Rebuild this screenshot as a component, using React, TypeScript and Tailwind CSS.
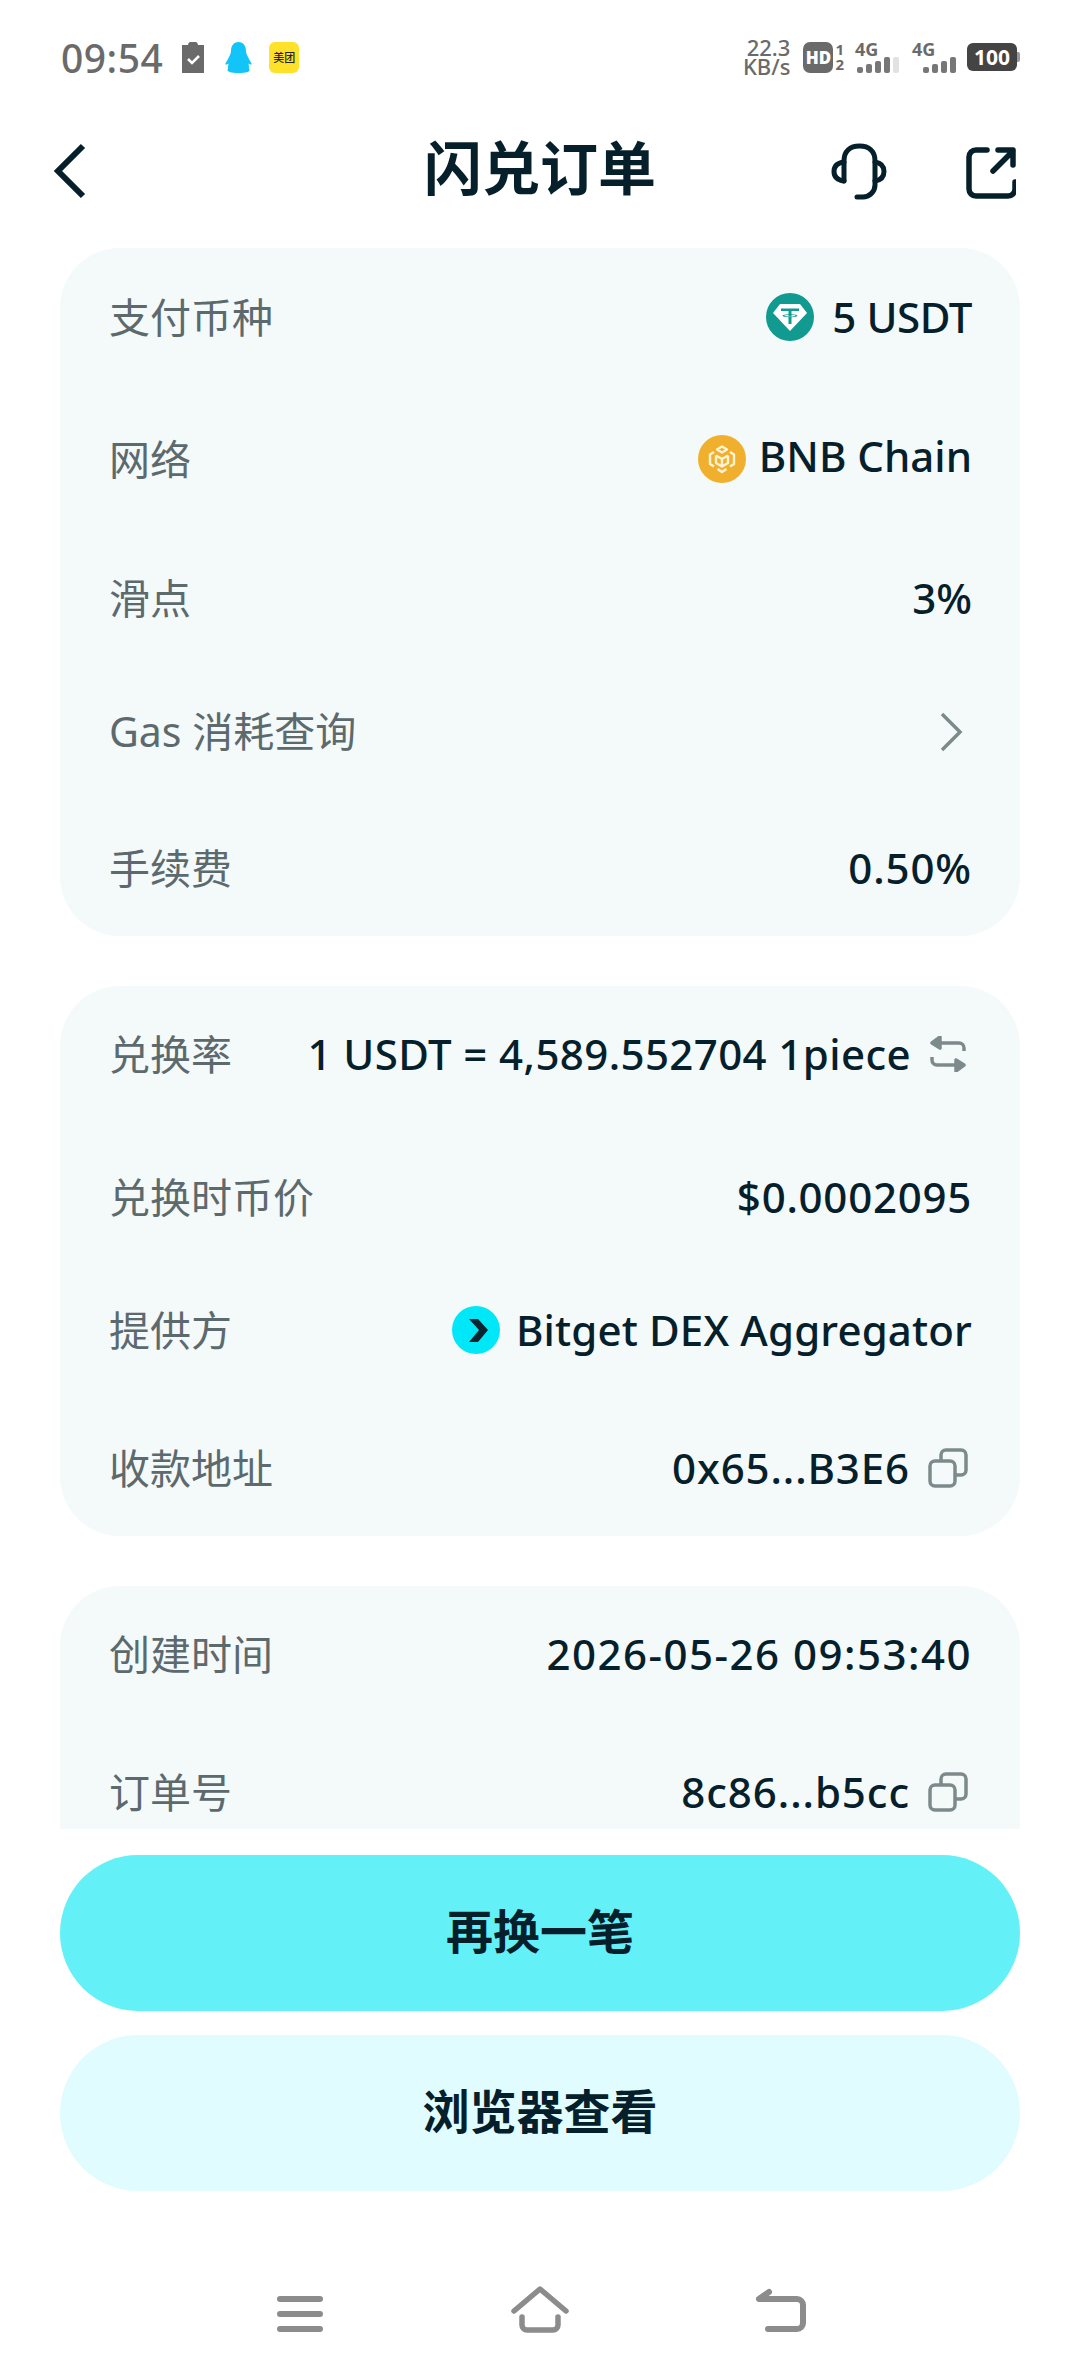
const FONT = "font-['Noto_Sans','Noto_Sans_CJK_SC',sans-serif]";

function CopyIcon() {
  return (
    <svg className="mr-[4px]" width="40" height="40" viewBox="0 0 40 40" fill="none" stroke="#7d8a8c" strokeWidth="3.5">
      <rect x="2" y="13" width="25" height="25" rx="5" />
      <path d="M13 12V7a5 5 0 0 1 5-5h15a5 5 0 0 1 5 5v15a5 5 0 0 1-5 5h-5" />
    </svg>
  );
}

function SwapIcon() {
  return (
    <svg className="mr-[5px]" width="38" height="36" viewBox="0 0 38 36" fill="#7d8a8c" stroke="#7d8a8c" strokeWidth="3.5" strokeLinejoin="round">
      <path d="M11 1 3 7l8 5Z" />
      <path d="M9 7h21a5 5 0 0 1 5 5v3" fill="none" />
      <path d="M27 35l8-6-8-5Z" />
      <path d="M29 29H8a5 5 0 0 1-5-5v-3" fill="none" />
    </svg>
  );
}

function TetherIcon() {
  return (
    <svg width="48" height="48" viewBox="0 0 48 48">
      <circle cx="24" cy="24" r="24" fill="#109a90" />
      <path d="M14 11h20l7 9-17 18L7 20Z" fill="#fff" />
      <path d="M15 15.500h18v2.500h-7.500v3.200c3.500.2 6 .8 6 1.500s-2.500 1.300-6 1.500V31h-3v-6.800c-3.500-.2-6-.8-6-1.500s2.500-1.300 6-1.500V18H15Zm7.500 6.600c-2.600.1-4.300.4-4.300.7s2.600.7 5.800.7 5.800-.3 5.800-.7-1.700-.6-4.300-.7v1.200h-3Z" fill="#109a90" />
    </svg>
  );
}

function BnbIcon() {
  return (
    <svg width="48" height="48" viewBox="0 0 48 48" fill="none">
      <circle cx="24" cy="24" r="24" fill="#f0b02e" />
      <g stroke="#fff3d4" strokeWidth="2.400" strokeLinejoin="round">
        <path d="M24 11.500 29 14.500 24 17.500 19 14.500Z" />
        <path d="M16 17 12 19.500V29l4 2.500M32 17l4 2.500V29l-4 2.500" />
        <path d="M18 20.500 24 24l6-3.500M24 24v7M18 20.500V28l6 3.500 6-3.500v-7.500" />
        <path d="M19.500 34l4.500 3 4.500-3" />
      </g>
    </svg>
  );
}

function BitgetIcon() {
  return (
    <svg width="48" height="48" viewBox="0 0 48 48">
      <circle cx="24" cy="24" r="24" fill="#00e8f8" />
      <path d="M17 13h9l10 11-10 12h-9l10-12Z" fill="#0a2530" />
    </svg>
  );
}

function Row({ label, h, children }: { label: string; h: string; children: React.ReactNode }) {
  return (
    <div className={`flex items-center justify-between ${h}`}>
      <span className="text-[41px] leading-none text-[#5c6a6e]">{label}</span>
      <div className="flex items-center gap-[18px] text-[42px] leading-none font-medium text-[#06202b]">{children}</div>
    </div>
  );
}

function Signal({ up }: { up?: boolean }) {
  return (
    <div className="relative h-[31px] w-[44px] text-[#6a6a6a]">
      <span className="absolute top-[-3px] left-0 text-[18px] leading-[20px] font-bold">4G</span>
      <div className="absolute right-0 bottom-0 flex items-end gap-[3px]">
        <div className="h-[6px] w-[6px] rounded-[2px] bg-[#777]" />
        <div className="h-[9px] w-[6px] rounded-[2px] bg-[#777]" />
        <div className="h-[12px] w-[6px] rounded-[2px] bg-[#777]" />
        <div className="h-[16px] w-[6px] rounded-[2px] bg-[#777]" />
        {up && <div className="h-[16px] w-[6px] rounded-[2px] bg-[#e2e2e2]" />}
      </div>
    </div>
  );
}

function StatusBar() {
  return (
    <div className="flex h-[114px] items-center justify-between pr-[60px] pl-[61px]">
      <div className="flex items-center">
        <span className="text-[39px] leading-none font-medium tracking-[0.5px] text-[#6a6a6a]">09:54</span>
        <svg className="ml-[19px]" width="22" height="31" viewBox="0 0 22 31">
          <path d="M0 3h6a5 4 0 0 1 10 0h6v28H0Z" fill="#6a6a6a" />
          <path d="M6 17l4 4 7-7" fill="none" stroke="#fff" strokeWidth="2.500" />
        </svg>
        <svg className="ml-[21px]" width="27" height="31" viewBox="0 0 27 31">
          <path d="M13.500 0c5 0 7.500 4 7.500 9 0 3 1.500 4.500 3 8 1 2.500 3.500 5 2.500 5.500-1 .5-2.500-1-3-1 .5 3 .5 5 1 7 0 1-3 2.500-11 2.500s-10.500-1.500-11-2.500c.5-2 .5-4 1-7-.5 0-2 1.500-3 1-1-.5 1.500-3 2.500-5.500 1.500-3.500 3-5 3-8 0-5 2.500-9 7.500-9Z" fill="#12c4f8" />
        </svg>
        <div className="ml-[17px] flex h-[31px] w-[30px] items-center justify-center rounded-[6px] bg-[#ffe12a] text-[11px] leading-none font-medium whitespace-nowrap text-[#222]">美团</div>
      </div>
      <div className="flex items-center">
        <div className="text-right text-[22px] leading-[19px] font-medium whitespace-nowrap text-[#6a6a6a]">
          22.3
          <br />
          KB/s
        </div>
        <div className="ml-[13px] flex h-[31px] w-[30px] items-center justify-center rounded-[7px] bg-[#6a6a6a] text-[17px] leading-none font-black text-white">HD</div>
        <div className="ml-[2px] text-center text-[15px] leading-[15px] font-bold text-[#6a6a6a]">
          1
          <br />
          2
        </div>
        <div className="ml-[11px]"><Signal up /></div>
        <div className="ml-[13px]"><Signal /></div>
        <div className="ml-[11px] flex h-[28px] w-[50px] items-center justify-center rounded-[6px] bg-[#444] text-[21px] leading-none font-bold text-white">100</div>
        <div className="h-[10px] w-[3px] rounded-r-[2px] bg-[#999]" />
      </div>
    </div>
  );
}

function Header() {
  return (
    <div className="relative flex h-[134px] items-center justify-center pb-[26px]">
      <svg className="absolute top-[28px] left-[52px]" width="36" height="58" viewBox="0 0 36 58" fill="none" stroke="#06202b" strokeWidth="6">
        <path d="M31 4 6 29l25 25" />
      </svg>
      <span className="text-[58px] leading-none font-semibold text-[#06202b]">闪兑订单</span>
      <svg className="absolute top-[29px] left-[831px]" width="56" height="58" viewBox="0 0 56 58" fill="none" stroke="#06202b" strokeWidth="5" strokeLinecap="round" strokeLinejoin="round">
        <path d="M13 38V18C13 8 19 3 28.500 3S44 8 44 18v24c0 7-6 12-12 12h-6" />
        <path d="M13 19C6 20 3 23 3 28.500S6 37 13 38" />
        <path d="M44 19c6 1 9 4 9 9.500S50 37 44 38" />
      </svg>
      <svg className="absolute top-[33px] left-[966px]" width="50" height="52" viewBox="0 0 50 52" fill="none" stroke="#06202b" strokeWidth="5.500" strokeLinecap="round" strokeLinejoin="round">
        <path d="M21 3H10a7 7 0 0 0-7 7v32a7 7 0 0 0 7 7h32a7 7 0 0 0 7-7V35" />
        <path d="M27 24 47 4M32 3h15v15" />
      </svg>
    </div>
  );
}

function Card({ className, children }: { className: string; children: React.ReactNode }) {
  return <div className={`mx-[60px] bg-[#f4f9fa] pr-[48px] pl-[49px] ${className}`}>{children}</div>;
}

function NavBar() {
  return (
    <div className="mt-[93px] flex justify-between px-[270px]">
      <svg width="60" height="60" viewBox="0 0 60 60" fill="none" stroke="#8c8c8c" strokeWidth="6" strokeLinecap="round">
        <path d="M10 15h40M10 30h40M10 45h40" />
      </svg>
      <svg width="60" height="60" viewBox="0 0 60 60" fill="none" stroke="#8c8c8c" strokeWidth="5.500" strokeLinecap="round" strokeLinejoin="round">
        <path d="M4 27 30 5l26 22" />
        <path d="M12 33v8a5 5 0 0 0 5 5h26a5 5 0 0 0 5-5v-8" />
      </svg>
      <svg width="60" height="60" viewBox="0 0 60 60" fill="none" stroke="#8c8c8c" strokeWidth="6" strokeLinecap="round" strokeLinejoin="round">
        <path d="M19 8 9 15h38a6 6 0 0 1 6 6v18a6 6 0 0 1-6 6H18" />
      </svg>
    </div>
  );
}

export default function App() {
  return (
    <div className={`${FONT} h-[2376px] w-[1080px] overflow-hidden bg-white`}>
      <StatusBar />
      <Header />
      <div className="flex h-[1581px] flex-col gap-[50px] overflow-hidden">
        <Card className="h-[688px] shrink-0 rounded-[60px]">
          <Row label="支付币种" h="h-[138px]">
            <TetherIcon />
            <span className="tracking-[-0.4px]">5 USDT</span>
          </Row>
          <Row label="网络" h="h-[146px]">
            <div className="flex items-center gap-[13px]">
              <BnbIcon />
              <span className="mb-[6px]">BNB Chain</span>
            </div>
          </Row>
          <Row label="滑点" h="h-[132px]">
            <span>3%</span>
          </Row>
          <Row label="Gas 消耗查询" h="h-[135px]">
            <svg className="mr-[9px]" width="24" height="40" viewBox="0 0 24 40" fill="none" stroke="#7d8a8c" strokeWidth="3.500">
              <path d="M3 2l18 18L3 38" />
            </svg>
          </Row>
          <Row label="手续费" h="h-[138px]">
            <span className="tracking-[0.9px]">0.50%</span>
          </Row>
        </Card>
        <Card className="h-[550px] shrink-0 rounded-[60px]">
          <Row label="兑换率" h="h-[136px]">
            <span className="tracking-[0.4px]">1 USDT = 4,589.552704 1piece</span>
            <SwapIcon />
          </Row>
          <Row label="兑换时币价" h="h-[150px]">
            <span className="tracking-[0.75px]">$0.0002095</span>
          </Row>
          <Row label="提供方" h="h-[116px]">
            <div className="flex items-center gap-[16px]">
              <BitgetIcon />
              <span className="tracking-[0.15px]">Bitget DEX Aggregator</span>
            </div>
          </Row>
          <Row label="收款地址" h="h-[148px] pt-[12px]">
            <span className="tracking-[0.9px]">0x65...B3E6</span>
            <CopyIcon />
          </Row>
        </Card>
        <Card className="flex-1 rounded-t-[60px]">
          <Row label="创建时间" h="h-[136px]">
            <span className="tracking-[1.5px]">2026-05-26 09:53:40</span>
          </Row>
          <Row label="订单号" h="h-[140px]">
            <span className="tracking-[0.95px]">8c86...b5cc</span>
            <CopyIcon />
          </Row>
        </Card>
      </div>
      <div className="mt-[26px] flex flex-col gap-[24px] px-[60px]">
        <button className="h-[156px] rounded-full bg-[#64f0f7] pb-[4px] text-[47px] font-semibold text-[#06202b]">再换一笔</button>
        <button className="h-[156px] rounded-full bg-[#e0fcff] pb-[4px] text-[47px] font-semibold text-[#06202b]">浏览器查看</button>
      </div>
      <NavBar />
    </div>
  );
}
